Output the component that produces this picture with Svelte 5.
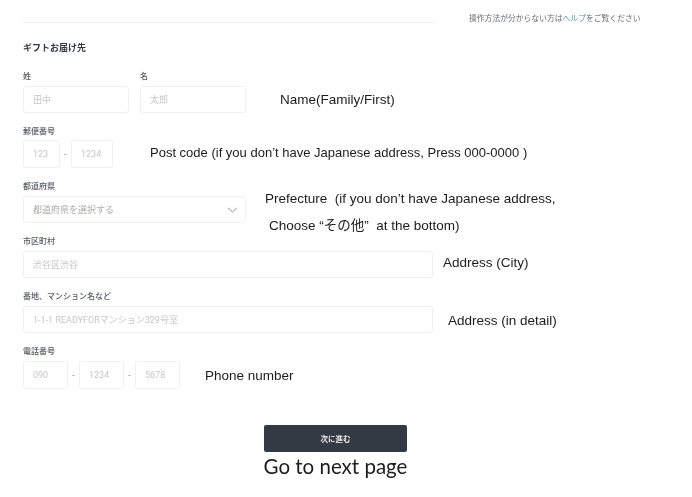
<script>
  const jp = 'help';
</script>

<div class="page">
  <header>
    <div class="rule"></div>
    <p class="help">操作方法が分からない方は<a href="#{jp}">ヘルプ</a>をご覧ください</p>
  </header>

  <h2>ギフトお届け先</h2>

  <section class="name">
    <div class="fields">
      <div class="field">
        <span class="label">姓</span>
        <input class="w106" placeholder="田中" />
      </div>
      <div class="field">
        <span class="label">名</span>
        <input class="w106" placeholder="太郎" />
      </div>
    </div>
    <p class="note name-note">Name(Family/First)</p>
  </section>

  <section class="post">
    <div class="field">
      <span class="label">郵便番号</span>
      <div class="joined tight">
        <input class="w37" placeholder="123" />
        <span class="dash">-</span>
        <input class="w42" placeholder="1234" />
      </div>
    </div>
    <p class="note post-note">Post code (if you don’t have Japanese address, Press 000-0000 )</p>
  </section>

  <section class="pref">
    <div class="field">
      <span class="label">都道府県</span>
      <div class="select">
        <span>都道府県を選択する</span>
        <svg width="11" height="6" viewBox="0 0 11 6"><path d="M1 .8l4.5 4.2L10 .8" fill="none" stroke="#8a8f94" stroke-width="1"/></svg>
      </div>
    </div>
    <div class="pref-notes">
      <p class="note">Prefecture&nbsp; (if you don’t have Japanese address,</p>
      <p class="note second">Choose “その他”&nbsp; at the bottom)</p>
    </div>
  </section>

  <section class="city">
    <div class="field">
      <span class="label">市区町村</span>
      <input class="wide" placeholder="渋谷区渋谷" />
    </div>
    <p class="note city-note">Address (City)</p>
  </section>

  <section class="detail">
    <div class="field">
      <span class="label">番地、マンション名など</span>
      <input class="wide" placeholder="1-1-1 READYFORマンション329号室" />
    </div>
    <p class="note detail-note">Address (in detail)</p>
  </section>

  <section class="phone">
    <div class="field">
      <span class="label">電話番号</span>
      <div class="joined">
        <input class="w45" placeholder="090" />
        <span class="dash">-</span>
        <input class="w45" placeholder="1234" />
        <span class="dash">-</span>
        <input class="w45" placeholder="5678" />
      </div>
    </div>
    <p class="note phone-note">Phone number</p>
  </section>

  <div class="actions">
    <button type="button">次に進む</button>
    <p class="next">Go to next page</p>
  </div>
</div>

<style>
  :global(body) {
    background: #fff;
    margin: 0;
  }

  .page {
    box-sizing: border-box;
    color: #333a42;
    filter: blur(0.6px);
    font-family: Roboto, "Noto Sans CJK JP", sans-serif;
    height: 497px;
    overflow: hidden;
    padding: 0 0 0 23px;
    width: 692px;
  }

  header {
    align-items: flex-start;
    display: flex;
    height: 23px;
  }

  .rule {
    background: #efefef;
    height: 1px;
    margin-top: 22px;
    width: 411px;
  }

  .help {
    color: #666b70;
    font-size: 7.8px;
    line-height: 10px;
    margin: 14px 0 0 35px;
    white-space: nowrap;
  }

  .help a {
    color: #4d9aa0;
    text-decoration: none;
  }

  h2 {
    font-size: 9px;
    font-weight: 700;
    line-height: 12px;
    margin: 19px 0 0 0;
  }

  section {
    align-items: flex-start;
    display: flex;
    height: 42px;
    margin-top: 13px;
  }

  section.name {
    margin-top: 17px;
  }

  .fields {
    display: flex;
    gap: 11px;
  }

  .field {
    display: flex;
    flex-direction: column;
    gap: 4px;
  }

  .label {
    color: #555b61;
    display: block;
    font-size: 8px;
    font-weight: 500;
    line-height: 10px;
    padding-top: 1px;
    white-space: nowrap;
  }

  input, .select {
    background: #fff;
    border: 1px solid #f0f0f0;
    border-radius: 3px;
    box-sizing: border-box;
    font-family: inherit;
    font-size: 9px;
    height: 27px;
    margin: 0;
    outline: none;
    padding: 0 9px;
  }

  input::placeholder {
    color: #c4c7ca;
    opacity: 1;
  }

  .w106 { width: 106px; }
  .w37 { width: 37px; }
  .w42 { width: 42px; }
  .w45 { width: 45px; }
  .wide { width: 410px; }

  .joined {
    align-items: center;
    display: flex;
  }

  .joined input {
    height: 28px;
  }

  .joined.tight {
    margin-top: -1px;
  }

  .dash {
    color: #888;
    font-size: 9px;
    text-align: center;
    width: 11px;
  }

  .select {
    align-items: center;
    color: #a9acb0;
    display: flex;
    justify-content: space-between;
    padding-right: 7px;
    width: 223px;
  }

  .note {
    color: #1c1c1c;
    font-family: "Liberation Sans", "Noto Sans CJK JP", sans-serif;
    font-size: 13.5px;
    line-height: 16px;
    margin: 0;
    white-space: nowrap;
  }

  .name-note { margin: 21px 0 0 34px; }
  .post-note { font-size: 13px; margin: 19px 0 0 37px; }
  .pref-notes { margin: 10px 0 0 19px; }
  .second { margin: 11px 0 0 4px; }
  .city-note { margin: 19px 0 0 10px; }
  .detail-note { margin: 22px 0 0 15px; }
  .phone-note { margin: 22px 0 0 25px; }

  .actions {
    align-items: center;
    display: flex;
    flex-direction: column;
    margin: 37px 0 0 241px;
    width: 143px;
  }

  button {
    background: #343a44;
    border: none;
    border-radius: 2px;
    color: #e8e8e8;
    font-family: inherit;
    font-size: 7.5px;
    font-weight: 700;
    height: 27px;
    padding: 0;
    width: 143px;
  }

  .next {
    color: #1c1c1c;
    font-family: Lato, sans-serif;
    font-size: 20.5px;
    line-height: 22px;
    margin: 3px 0 0 0;
    white-space: nowrap;
  }
</style>
